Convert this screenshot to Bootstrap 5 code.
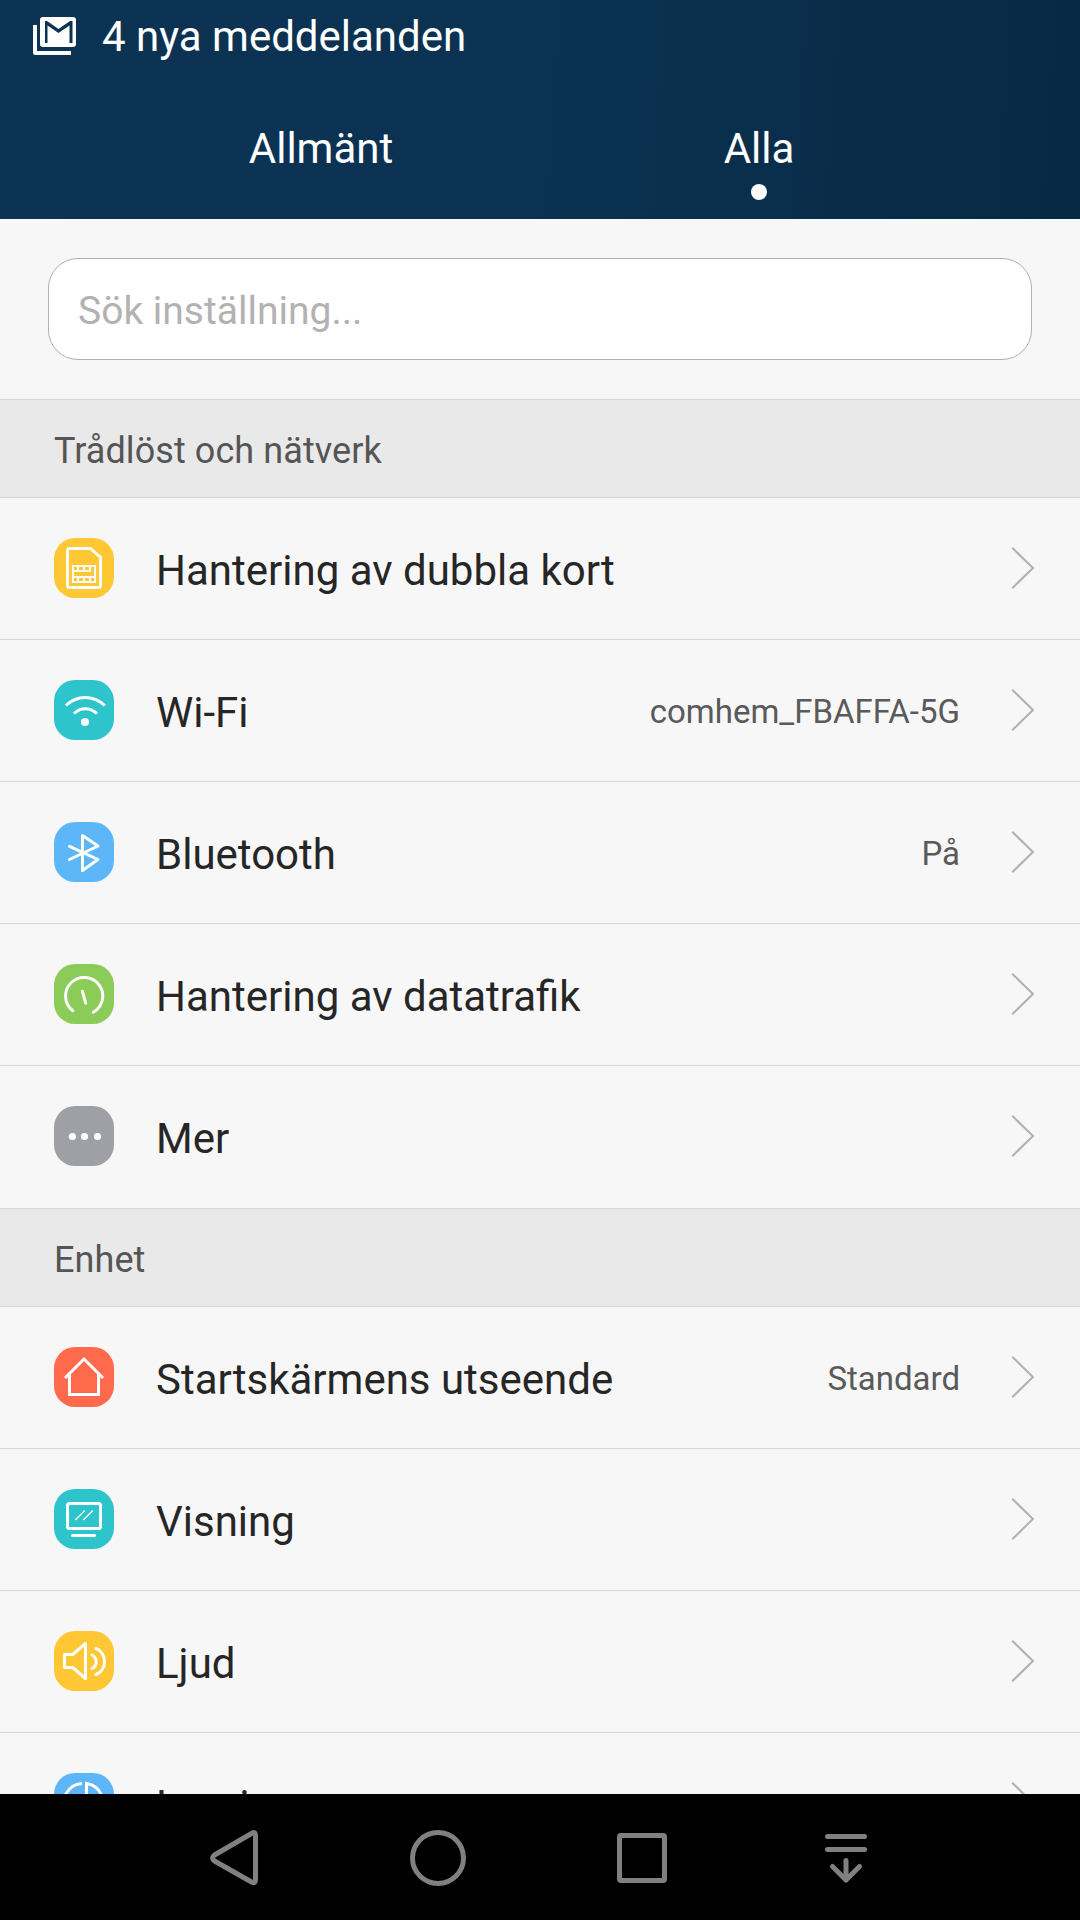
<!DOCTYPE html>
<html lang="sv">
<head>
<meta charset="utf-8">
<meta name="viewport" content="width=device-width, initial-scale=1">
<title>Inställningar</title>
<link href="https://cdn.jsdelivr.net/npm/bootstrap@5.3.0/dist/css/bootstrap.min.css" rel="stylesheet">
<style>
  body { font-family: Roboto, "Noto Sans", sans-serif; font-size: 42px; line-height: 50px; background: #f7f7f7; color: #262626; }
  .screen { width: 1080px; height: 1920px; }
  .top-area { height: 219px; background: linear-gradient(94deg, #0c3353 0%, #0b3252 50%, #092d49 78%, #072a44 100%); }
  .status-line { height: 73px; padding-left: 32px; gap: 25px; }
  .status-line svg { margin-bottom: 1px; }
  .tab-strip { height: 146px; padding: 0 143px; }
  .tab-strip .nav-link { width: 356px; padding: 51px 0 0; color: #fff; line-height: 50px; text-align: center; }
  .tab-strip .nav-item + .nav-item { margin-left: 82px; }
  .tab-dot { width: 16px; height: 16px; margin: 10px auto 0; }
  .search-area { height: 180px; padding: 39px 48px 0; }
  .search-area .form-control { height: 102px; border: 1px solid #b0b0b0; border-radius: 30px; padding: 4px 29px 0; font-size: 39px; color: #262626; background: #fff; }
  .search-area .form-control::placeholder { color: #b2b2b2; opacity: 1; }
  .group-title { height: 99px; margin: 0; padding: 4px 54px 0; font-size: 36px; font-weight: 400; line-height: 42px; letter-spacing: .08px; color: #555; background: #e9e9e9; border: solid #d7d7d7; border-width: 1px 0; }
  .setting { height: 142px; padding: 0 45px 0 54px; color: #262626; background: #f7f7f7; border-bottom: 1px solid #d7d7d7; }
  .setting.last-of-group { border-bottom-color: #f7f7f7; }
  .setting-icon { width: 60px; height: 60px; border-radius: 21px; margin: 0 42px 1px 0; }
  .setting-icon svg { display: block; fill: none; stroke: #fff; stroke-width: 3; }
  .setting-name { padding-top: 4px; }
  .setting-value { padding-top: 2px; margin-right: 51px; font-size: 33px; color: #5a5a5a; }
  .chevron { width: 24px; height: 44px; margin-bottom: 1px; fill: none; stroke: #b0b0b0; stroke-width: 2; }
  .amber { background: #ffc733; } .teal { background: #2dc4cb; } .sky { background: #5cb6f8; }
  .leaf { background: #8bcb57; } .ash { background: #9fa0a6; } .coral { background: #ff6a4d; }
  .key-bar { height: 126px; background: #000; padding-left: 206px; gap: 147px; }
  .key-bar svg { fill: none; stroke: #808080; stroke-width: 5; stroke-linejoin: round; stroke-linecap: round; display: block; }
</style>
</head>
<body>
<svg class="d-none"><symbol id="chev" viewBox="0 0 24 44"><path d="M1.200 1.800L22 22L1.200 42.200"/></symbol></svg>
<div class="screen d-flex flex-column overflow-hidden">
  <header class="top-area flex-shrink-0 text-white">
    <div class="status-line d-flex align-items-center">
      <svg width="45" height="40" viewBox="0 0 45 40"><path d="M3 9V36.500Q3 37 3.500 37H39" fill="none" stroke="#fff" stroke-width="4"/><path fill="#fff" fill-rule="evenodd" d="M11 1H41Q44 1 44 4V28Q44 31 41 31H11Q8 31 8 28V4Q8 1 11 1ZM13 5V27H15.500V9.500L26.500 17L37.500 9.500V27H40.500V5H38L26.500 13L15 5Z"/></svg>
      <span>4 nya meddelanden</span>
    </div>
    <ul class="tab-strip nav flex-nowrap">
      <li class="nav-item"><a class="nav-link" href="#">Allmänt</a></li>
      <li class="nav-item"><a class="nav-link" href="#">Alla</a><div class="tab-dot rounded-circle bg-white"></div></li>
    </ul>
  </header>
  <main class="flex-grow-1 overflow-hidden">
    <div class="search-area"><input class="form-control" type="text" placeholder="Sök inställning..."></div>
    <h2 class="group-title d-flex align-items-center">Trådlöst och nätverk</h2>
    <div>
      <div class="setting d-flex align-items-center">
        <span class="setting-icon amber"><svg width="60" height="60"><path d="M15.500 10.500H36.500L46.500 19.500V47.500Q46.500 49.500 44.500 49.500H15.500Q13.500 49.500 13.500 47.500V12.500Q13.500 10.500 15.500 10.500Z"/><path fill="#fff" stroke="none" fill-rule="evenodd" d="M18 27H42V45H18ZM20 29V32H23V29ZM25 29V32H29V29ZM31 29V32H35V29ZM37 29V34H20V38H40V29ZM20 40V43H23V40ZM25 40V43H29V40ZM31 40V43H35V40ZM37 40V43H40V40Z"/></svg></span>
        <span class="setting-name flex-grow-1">Hantering av dubbla kort</span>
        <svg class="chevron"><use href="#chev"/></svg>
      </div>
      <div class="setting d-flex align-items-center">
        <span class="setting-icon teal"><svg width="60" height="60"><path d="M12 25.500Q20.500 17.600 31.200 17.600T50.800 25.500M20 33.500Q25 28.700 31.200 28.700T43 33.500"/><circle cx="31" cy="42" r="4" fill="#fff" stroke="none"/></svg></span>
        <span class="setting-name flex-grow-1">Wi-Fi</span>
        <span class="setting-value">comhem_FBAFFA-5G</span>
        <svg class="chevron"><use href="#chev"/></svg>
      </div>
      <div class="setting d-flex align-items-center">
        <span class="setting-icon sky"><svg width="60" height="60"><path d="M15.500 37.500L44 24L28.500 13.500V48.500L44 37.500L15.500 24.300" stroke-linecap="round" stroke-linejoin="round"/></svg></span>
        <span class="setting-name flex-grow-1">Bluetooth</span>
        <span class="setting-value">På</span>
        <svg class="chevron"><use href="#chev"/></svg>
      </div>
      <div class="setting d-flex align-items-center">
        <span class="setting-icon leaf"><svg width="60" height="60"><path d="M18.800 46.700A18.600 18.600 0 1 1 39.300 48.200M28.400 27.300L31.700 39.200" stroke-linecap="round"/></svg></span>
        <span class="setting-name flex-grow-1">Hantering av datatrafik</span>
        <svg class="chevron"><use href="#chev"/></svg>
      </div>
      <div class="setting last-of-group d-flex align-items-center">
        <span class="setting-icon ash"><svg width="60" height="60"><g fill="#fff" stroke="none"><circle cx="18.400" cy="30.500" r="3.600"/><circle cx="30.500" cy="30.500" r="3.600"/><circle cx="43.500" cy="30.500" r="3.600"/></g></svg></span>
        <span class="setting-name flex-grow-1">Mer</span>
        <svg class="chevron"><use href="#chev"/></svg>
      </div>
    </div>
    <h2 class="group-title d-flex align-items-center">Enhet</h2>
    <div>
      <div class="setting d-flex align-items-center">
        <span class="setting-icon coral"><svg width="60" height="60"><path d="M11 31L30 12L49 31M15.500 27V47.500H44.500V27"/></svg></span>
        <span class="setting-name flex-grow-1">Startskärmens utseende</span>
        <span class="setting-value">Standard</span>
        <svg class="chevron"><use href="#chev"/></svg>
      </div>
      <div class="setting d-flex align-items-center">
        <span class="setting-icon teal"><svg width="60" height="60"><rect x="13.500" y="14.500" width="33" height="25" rx="2"/><path d="M18.500 46.500H40.500" stroke-linecap="round"/><path d="M21.200 31L30.800 21.500M29.200 31L38.800 21.500" stroke-width="1.200"/></svg></span>
        <span class="setting-name flex-grow-1">Visning</span>
        <svg class="chevron"><use href="#chev"/></svg>
      </div>
      <div class="setting d-flex align-items-center">
        <span class="setting-icon amber"><svg width="60" height="60"><path stroke-linejoin="round" stroke-linecap="round" d="M10.500 23.500H18.700L31.500 12.500V47.500L18.700 36.500H10.500ZM38 24A7.500 7.500 0 0 1 38 37.500M42 17.500C53.300 21.500 53.300 39.500 42 43.500"/></svg></span>
        <span class="setting-name flex-grow-1">Ljud</span>
        <svg class="chevron"><use href="#chev"/></svg>
      </div>
      <div class="setting d-flex align-items-center">
        <span class="setting-icon sky"><svg width="60" height="60"><path d="M28 10.500A19.500 19.500 0 1 0 45 41.500M32.500 30V10.500A19.500 19.500 0 0 1 46.500 39.500Z"/></svg></span>
        <span class="setting-name flex-grow-1">Lagring</span>
        <svg class="chevron"><use href="#chev"/></svg>
      </div>
    </div>
  </main>
  <nav class="key-bar flex-shrink-0 d-flex align-items-center">
    <svg width="56" height="60"><path d="M49.500 8.500Q49.500 4 45.500 6.500L8.500 28Q4.500 31 8.500 34L45.500 55Q49.500 57 49.500 53Z"/></svg>
    <svg width="60" height="60"><circle cx="29" cy="31" r="25.500"/></svg>
    <svg width="60" height="60"><rect x="3.500" y="8.500" width="45" height="45" rx="1.500"/></svg>
    <svg width="50" height="60"><path d="M4.500 9.500H41.500M4.500 22.500H41.500M23 33.500V53M9.500 39.500L23 53L36.500 39.500"/></svg>
  </nav>
</div>
<script src="https://cdn.jsdelivr.net/npm/bootstrap@5.3.0/dist/js/bootstrap.bundle.min.js"></script>
</body>
</html>
